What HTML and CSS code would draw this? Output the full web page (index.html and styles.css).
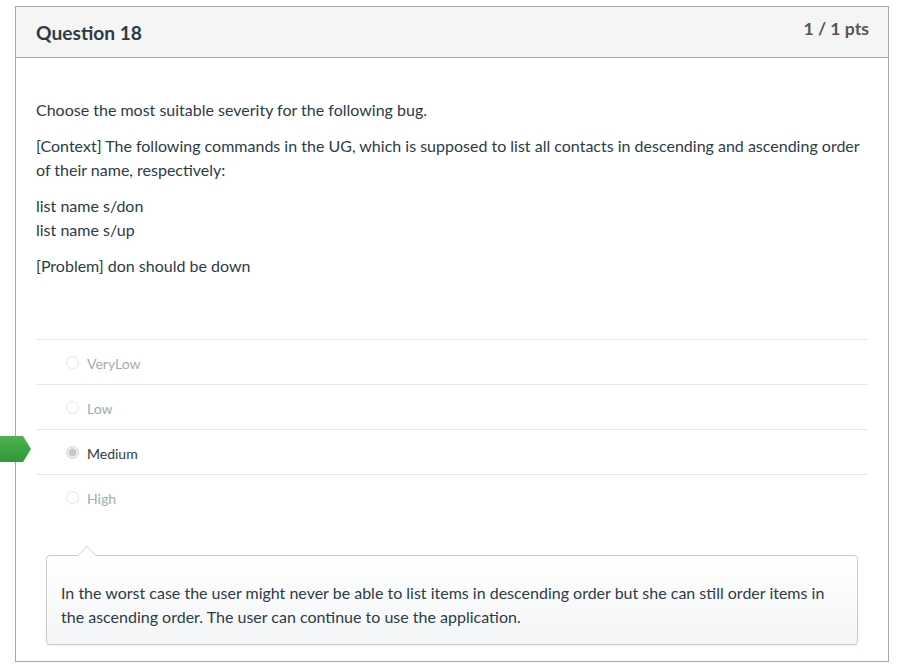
FILE: index.html
```html
<!DOCTYPE html>
<html>
<head>
<meta charset="utf-8">
<link rel="stylesheet" href="styles.css">
</head>
<body>
<div class="page">
  <div class="question">
    <div class="header">
      <h2 class="title">Question 18</h2>
      <div class="pts">1 / 1 pts</div>
    </div>
    <div class="content">
      <div class="text">
        <p>Choose the most suitable severity for the following bug.</p>
        <p>[Context] The following commands in the UG, which is supposed to list all contacts in descending and ascending order of their name, respectively:</p>
        <p>list name s/don<br>list name s/up</p>
        <p>[Problem] don should be down</p>
      </div>
      <div class="answers">
        <div class="answer"><span class="radio"></span><span class="label">VeryLow</span></div>
        <div class="answer"><span class="radio"></span><span class="label">Low</span></div>
        <div class="answer selected"><span class="marker"></span><span class="radio"></span><span class="label">Medium</span></div>
        <div class="answer"><span class="radio"></span><span class="label">High</span></div>
      </div>
      <div class="comment">
        <p>In the worst case the user might never be able to list items in descending order but she can still order items in the ascending order. The user can continue to use the application.</p>
      </div>
    </div>
  </div>
</div>
</body>
</html>
```
FILE: styles.css
```css
html, body {
  margin: 0;
  padding: 0;
  background: #fff;
}
body {
  font-family: Lato, "Open Sans", sans-serif;
  color: #2d3b45;
}
.page {
  padding: 6px 15px 0 15px;
}
.question {
  width: 872px;
  border: 1px solid #a9a9a9;
}
.header {
  height: 50px;
  background: #f5f5f5;
  border-bottom: 1px solid #a9a9a9;
  display: flex;
  align-items: center;
  justify-content: space-between;
  padding: 0 19px 0 20px;
}
.title {
  margin: 0;
  font-size: 19.2px;
  font-weight: 700;
  color: #2d3b45;
}
.pts {
  font-size: 17.6px;
  font-weight: 700;
  color: #555;
  margin-top: -8px;
}
.content {
  padding: 40px 20px 16px 20px;
}
.text p {
  margin: 0 0 12px;
  font-size: 16px;
  line-height: 24px;
}
.answers {
  margin-top: 61px;
}
.answer {
  position: relative;
  height: 42px;
  padding-top: 2px;
  border-top: 1px solid #e6e6e6;
  display: flex;
  align-items: center;
  padding-left: 30px;
  font-size: 14px;
  color: #a3abb1;
}
.radio {
  width: 13px;
  height: 13px;
  border: 1px solid #e3e5e7;
  border-radius: 50%;
  background: #fff;
  margin-right: 8px;
  box-sizing: border-box;
  margin-top: -2px;
}
.selected {
  color: #2d3b45;
}
.selected .radio {
  border: 1px solid #cfd2d4;
  background: radial-gradient(circle, #c9c9c9 0 3.5px, #f4f4f4 4.5px);
}
.marker {
  position: absolute;
  left: -36px;
  top: 6px;
  width: 31px;
  height: 26px;
  background: linear-gradient(#4ab34e, #33963a);
  clip-path: polygon(0 0, 23px 0, 31px 50%, 23px 100%, 0 100%);
}
.comment {
  position: relative;
  margin: 36px 10px 0;
  border: 1px solid #c7cdd1;
  border-radius: 4px;
  background: linear-gradient(#fff, #f4f5f7);
  box-shadow: 0 1px 2px rgba(0,0,0,0.08);
  padding: 25px 14px 15px;
}
.comment::before,
.comment::after {
  content: "";
  position: absolute;
  left: 31px;
  border: 9px solid transparent;
  border-top: 0;
}
.comment::before {
  top: -10px;
  border-bottom: 9px solid #c7cdd1;
}
.comment::after {
  top: -9px;
  left: 31px;
  border-bottom: 9px solid #fff;
}
.comment p {
  margin: 0;
  font-size: 16px;
  line-height: 24px;
}
```
